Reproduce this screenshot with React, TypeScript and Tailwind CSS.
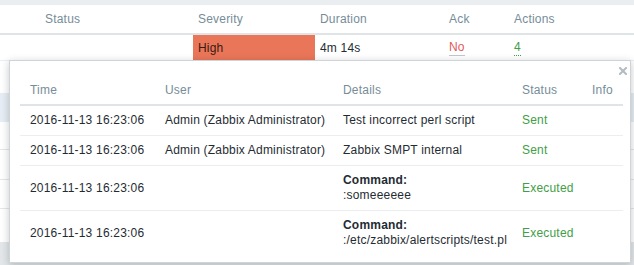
const actions = [
  { time: "2016-11-13 16:23:06", user: "Admin (Zabbix Administrator)", details: "Test incorrect perl script", status: "Sent" },
  { time: "2016-11-13 16:23:06", user: "Admin (Zabbix Administrator)", details: "Zabbix SMPT internal", status: "Sent" },
  { time: "2016-11-13 16:23:06", user: "", command: ":someeeeee", status: "Executed" },
  { time: "2016-11-13 16:23:06", user: "", command: ":/etc/zabbix/alertscripts/test.pl", status: "Executed" },
];

function CloseIcon() {
  return (
    <svg width="8" height="8" viewBox="0 0 8 8" className="block">
      <path d="M1 1L7 7M7 1L1 7" stroke="#b1bcc1" strokeWidth="2" strokeLinecap="square" />
    </svg>
  );
}

export default function App() {
  return (
    <div className="relative h-[265px] w-[634px] overflow-hidden bg-white font-['Liberation_Sans',Arial,sans-serif] text-[12px] leading-[15px] tracking-[0.2px] text-[#1f2c33]">
      <div className="h-[5px] bg-[#ebeef0]" />

      {/* problem table behind the popup */}
      <div className="flex h-[30px] items-end border-b-2 border-[#dfe4e7] pb-[6px] text-[#768d99]">
        <div className="w-[40px]" />
        <div className="w-[153px] pl-[5px]">Status</div>
        <div className="w-[122px] pl-[5px]">Severity</div>
        <div className="w-[129px] pl-[5px]">Duration</div>
        <div className="w-[65px] pl-[5px]">Ack</div>
        <div className="flex-1 pl-[5px]">Actions</div>
      </div>
      <div className="flex h-[26px] border-b border-[#ebeef0]">
        <div className="w-[40px]" />
        <div className="w-[153px]" />
        <div className="flex w-[122px] items-center bg-[#e97659] pl-[5px] pt-[1px] text-[#3a1a12]">High</div>
        <div className="flex w-[129px] items-center pl-[5px] pt-[1px]">4m 14s</div>
        <div className="flex w-[65px] items-center pl-[5px] pt-[1px]">
          <span className="border-b border-[#bfc8cc] text-[#e45959]">No</span>
        </div>
        <div className="flex flex-1 items-center pl-[5px] pt-[1px]">
          <span className="border-b border-dotted border-[#429e47] text-[#429e47]">4</span>
        </div>
      </div>
      <div className="h-[32px]" />
      <div className="h-[29px] bg-[#e6edf4]" />
      <div className="h-[28px] border-b border-[#e3e7ea]" />
      <div className="h-[30px] border-b border-[#e3e7ea]" />
      <div className="h-[29px] border-b border-[#e3e7ea]" />
      <div className="h-[33px]" />
      <div className="h-[30px] bg-[#e3e7ea]" />

      {/* actions popup */}
      <div className="absolute left-[9px] top-[60px] h-[203px] w-[622px] border border-[#ccd5d9] bg-white pl-[10px] pr-[7px] pt-[15px] shadow-[0_2px_8px_rgba(0,0,0,0.22)]">
        <button className="absolute right-[3px] top-[6px]">
          <CloseIcon />
        </button>
        <div className="grid grid-cols-[135px_178px_179px_70px_1fr] border-b-2 border-[#dfe4e7] pb-[6px] pt-[7px] text-[#768d99]">
          <div className="pl-[10px]">Time</div>
          <div className="pl-[10px]">User</div>
          <div className="pl-[10px]">Details</div>
          <div className="pl-[10px]">Status</div>
          <div className="pl-[10px]">Info</div>
        </div>
        {actions.map((a, i) => (
          <div
            key={i}
            className="grid grid-cols-[135px_178px_179px_70px_1fr] items-center border-b border-[#ebeef0] py-[7px] last:border-b-0"
          >
            <div className="pl-[10px]">{a.time}</div>
            <div className="pl-[10px]">{a.user}</div>
            <div className="pl-[10px]">
              {a.command ? (
                <>
                  <div className="font-bold">Command:</div>
                  <div>{a.command}</div>
                </>
              ) : (
                a.details
              )}
            </div>
            <div className="pl-[10px] text-[#429e47]">{a.status}</div>
            <div className="pl-[10px]" />
          </div>
        ))}
      </div>
    </div>
  );
}
